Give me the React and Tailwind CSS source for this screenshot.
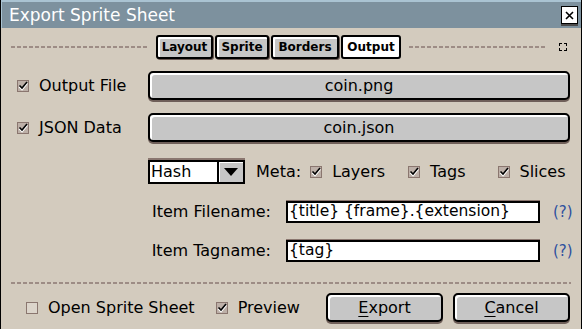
import React from 'react';

const font = { fontFamily: '"DejaVu Sans", "Liberation Sans", sans-serif' };

const Dashed = ({ className = '' }) => (
  <div className={`h-[2px] bg-[repeating-linear-gradient(90deg,#9d8c85_0_4px,transparent_4px_6px)] ${className}`} />
);

const CheckBox = ({ checked }) => (
  <svg width="12" height="12" viewBox="0 0 12 12" className="shrink-0">
    <rect x="0.5" y="0.5" width="11" height="11" fill={checked ? '#bdb0a8' : '#dcd5cb'} stroke="#8a766f" />
    {checked && (
      <>
        <path d="M2.5 6.5 L5 9 L10 3" fill="none" stroke="#fff" strokeWidth="2.4" />
        <path d="M2.5 5.5 L5 8 L10 2" fill="none" stroke="#000" strokeWidth="1.6" />
      </>
    )}
  </svg>
);

const Check = ({ checked, label, className = '' }) => (
  <div className={`flex items-center gap-[10px] ${className}`}>
    <CheckBox checked={checked} />
    <span className="text-[16px] text-black leading-none">{label}</span>
  </div>
);

const Tab = ({ label, active, w }) => (
  <div
    className={`h-[24px] flex items-center justify-center border-2 border-black rounded-[3px] text-[12px] font-bold text-black ${w} ${
      active ? 'bg-white' : 'bg-[#c6c6c6] shadow-[inset_2px_2px_0_#fff,1px_1px_0_#6b5b55]'
    }`}
  >
    {label}
  </div>
);

const BigButton = ({ children, className = '' }) => (
  <div
    className={`h-[29px] flex items-center justify-center bg-[#c6c6c6] border-2 border-black rounded-[5px] shadow-[inset_2px_2px_0_#fff,0_2px_0_#6f5f59] text-[16px] text-black ${className}`}
  >
    {children}
  </div>
);

const TextField = ({ value }) => (
  <div className="w-[254px] h-[22px] bg-white border-2 border-black flex items-center px-[1px] text-[15.5px] text-black shadow-[0_-1px_0_#8a766f] whitespace-nowrap overflow-hidden">
    {value}
  </div>
);

export default function App() {
  return (
    <div className="w-[582px] h-[329px] bg-[#d3cbbe] flex flex-col border-x border-black overflow-hidden" style={font}>
      {/* title bar */}
      <div className="h-[28px] shrink-0 bg-[#7d919e] border-t-2 border-l border-[#aac3d2] flex items-center justify-between pl-[7px] pr-[3px]">
        <span className="text-white text-[17px] leading-none">Export Sprite Sheet</span>
        <div className="w-[17px] h-[18px] bg-white border border-black shadow-[0_2px_0_#4b4b4b] flex items-center justify-center">
          <svg width="9" height="9" viewBox="0 0 9 9">
            <path d="M1 1 L8 8 M8 1 L1 8" stroke="#000" strokeWidth="1.6" />
          </svg>
        </div>
      </div>

      {/* tabs */}
      <div className="mt-[7px] flex items-center pl-[10px] pr-[14px]">
        <Dashed className="w-[138px]" />
        <div className="ml-[7px] flex gap-[2px]">
          <Tab label="Layout" w="w-[57px]" />
          <Tab label="Sprite" w="w-[54px]" />
          <Tab label="Borders" w="w-[68px]" />
          <Tab label="Output" w="w-[60px]" active />
        </div>
        <Dashed className="ml-[8px] w-[137px]" />
        <svg width="8" height="8" viewBox="0 0 8 8" className="ml-auto">
          <path d="M0 0h3v1H1v2H0z M5 0h3v3H7V1H5z M0 5h1v2h2v1H0z M7 5h1v3H5V7h2z" fill="#000" />
        </svg>
      </div>

      {/* output file */}
      <div className="mt-[12px] flex items-center pl-[16px] pr-[11px]">
        <Check checked label="Output File" className="w-[131px]" />
        <BigButton className="flex-1">coin.png</BigButton>
      </div>

      {/* json data */}
      <div className="mt-[13px] flex items-center pl-[16px] pr-[11px]">
        <Check checked label="JSON Data" className="w-[131px]" />
        <BigButton className="flex-1">coin.json</BigButton>
      </div>

      {/* hash / meta */}
      <div className="mt-[18px] flex items-center pl-[147px]">
        <div className="flex h-[24px] shadow-[0_-2px_0_#8a766f]">
          <div className="w-[71px] bg-white border-2 border-black flex items-center px-[1px] text-[16px] text-black">Hash</div>
          <div className="w-[26px] bg-[#c6c6c6] border-2 border-l-0 border-black flex items-center justify-center shadow-[inset_1px_1px_0_#fff]">
            <svg width="14" height="8" viewBox="0 0 14 8">
              <path d="M0 0h14L7 8z" fill="#000" />
            </svg>
          </div>
        </div>
        <span className="ml-[11px] text-[16px] text-black">Meta:</span>
        <Check checked label="Layers" className="ml-[9px]" />
        <Check checked label="Tags" className="ml-[23px]" />
        <Check checked label="Slices" className="ml-[32px]" />
      </div>

      {/* item filename */}
      <div className="mt-[16px] flex items-center">
        <span className="w-[270px] text-right text-[16px] text-black">Item Filename:</span>
        <div className="ml-[15px]"><TextField value="{title} {frame}.{extension}" /></div>
        <span className="ml-[13px] text-[15px] text-[#2d4f9e]">(?)</span>
      </div>

      {/* item tagname */}
      <div className="mt-[15px] flex items-center">
        <span className="w-[270px] text-right text-[16px] text-black">Item Tagname:</span>
        <div className="ml-[15px]"><TextField value="{tag}" /></div>
        <span className="ml-[13px] text-[15px] text-[#2d4f9e]">(?)</span>
      </div>

      <Dashed className="mt-[19px] mx-[10px]" />

      {/* bottom */}
      <div className="mt-[9px] flex items-center pl-[25px] pr-[11px]">
        <Check label="Open Sprite Sheet" />
        <Check checked label="Preview" className="ml-[21px]" />
        <BigButton className="ml-auto w-[117px]">
          <span><span className="underline underline-offset-[3px]">E</span>xport</span>
        </BigButton>
        <BigButton className="ml-[10px] w-[117px]">
          <span><span className="underline underline-offset-[3px]">C</span>ancel</span>
        </BigButton>
      </div>
    </div>
  );
}
